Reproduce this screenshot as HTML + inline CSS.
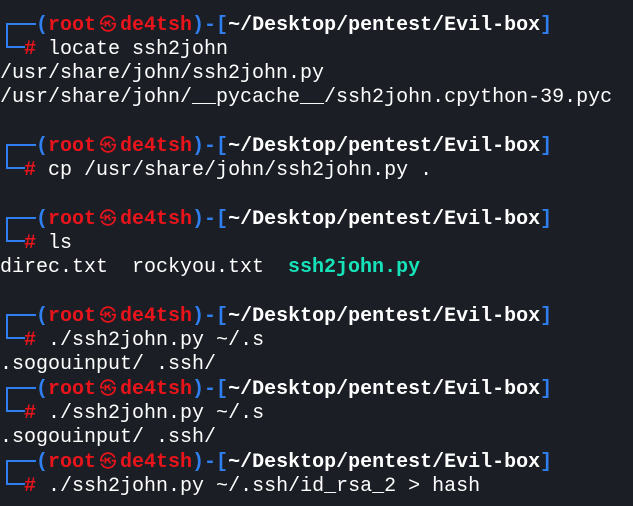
<!DOCTYPE html>
<html><head><meta charset="utf-8"><style>
html,body{margin:0;padding:0;background:#1b1e25;width:633px;height:506px;overflow:hidden}
pre{margin:0;padding:13px 0 0 0;font-family:"Liberation Mono","DejaVu Sans Mono",monospace;font-size:20px;line-height:24px;color:#ffffff;white-space:pre}
.b{color:#2f7ff0;font-weight:bold}.r{color:#e8141b;font-weight:bold}.w{color:#fff;font-weight:bold}.c{color:#16e3b9;font-weight:bold}
.k{display:inline-block;width:24px;text-align:center;font-family:"DejaVu Sans","Noto Sans CJK JP",sans-serif;font-size:17px;font-weight:bold}
.bx{display:inline-block;width:36px;height:24px;vertical-align:top;position:relative}
.bx::before{content:"";position:absolute;left:6px;top:10px;width:28px;height:23px;border-left:2px solid #2f7ff0;border-top:2px solid #2f7ff0}
.bx::after{content:"";position:absolute;left:6px;top:33px;width:19px;height:2px;background:#2f7ff0}
</style></head><body><pre><span class="bx"></span><span class="b">(</span><span class="r">root<span class="k">㉿</span>de4tsh</span><span class="b">)-[</span><span class="w">~/Desktop/pentest/Evil-box</span><span class="b">]</span>
  <span class="r">#</span> locate ssh2john
/usr/share/john/ssh2john.py
/usr/share/john/__pycache__/ssh2john.cpython-39.pyc

<span class="bx"></span><span class="b">(</span><span class="r">root<span class="k">㉿</span>de4tsh</span><span class="b">)-[</span><span class="w">~/Desktop/pentest/Evil-box</span><span class="b">]</span>
  <span class="r">#</span> cp /usr/share/john/ssh2john.py .

<span class="bx"></span><span class="b">(</span><span class="r">root<span class="k">㉿</span>de4tsh</span><span class="b">)-[</span><span class="w">~/Desktop/pentest/Evil-box</span><span class="b">]</span>
  <span class="r">#</span> ls
direc.txt  rockyou.txt  <span class="c">ssh2john.py</span>

<span class="bx"></span><span class="b">(</span><span class="r">root<span class="k">㉿</span>de4tsh</span><span class="b">)-[</span><span class="w">~/Desktop/pentest/Evil-box</span><span class="b">]</span>
  <span class="r">#</span> ./ssh2john.py ~/.s
.sogouinput/ .ssh/
<span class="bx"></span><span class="b">(</span><span class="r">root<span class="k">㉿</span>de4tsh</span><span class="b">)-[</span><span class="w">~/Desktop/pentest/Evil-box</span><span class="b">]</span>
  <span class="r">#</span> ./ssh2john.py ~/.s
.sogouinput/ .ssh/
<span class="bx"></span><span class="b">(</span><span class="r">root<span class="k">㉿</span>de4tsh</span><span class="b">)-[</span><span class="w">~/Desktop/pentest/Evil-box</span><span class="b">]</span>
  <span class="r">#</span> ./ssh2john.py ~/.ssh/id_rsa_2 &gt; hash</pre></body></html>
